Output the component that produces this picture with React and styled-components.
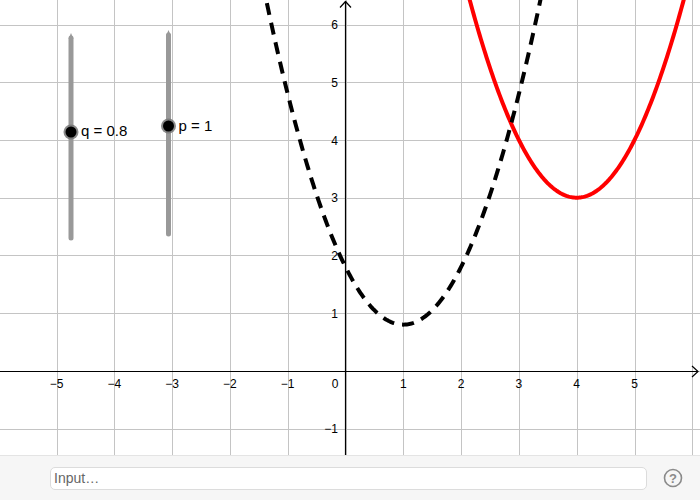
import React from 'react';
import styled, { createGlobalStyle } from 'styled-components';

const GlobalStyle = createGlobalStyle`
  html, body {
    margin: 0;
    padding: 0;
    background: #ffffff;
    font-family: "Liberation Sans", Arial, sans-serif;
  }
`;

const AppWrapper = styled.div`
  width: 700px;
  height: 500px;
  display: flex;
  flex-direction: column;
  overflow: hidden;
`;

const GraphicsView = styled.div`
  height: 455px;
  background-color: #ffffff;
  flex-shrink: 0;
`;

const Canvas = styled.svg`
  display: block;
  font-family: "Liberation Sans", Arial, sans-serif;
`;

const InputBar = styled.div`
  flex: 1;
  display: flex;
  align-items: center;
  gap: 16px;
  padding: 0 17px 0 50px;
  background-color: #f6f6f6;
  border-top: 1px solid #e4e4e4;
`;

const InputField = styled.input`
  flex: 1;
  height: 23px;
  box-sizing: border-box;
  border: 1px solid #dcdcdc;
  border-radius: 5px;
  background-color: #ffffff;
  padding: 0 3px;
  font-family: "Liberation Sans", Arial, sans-serif;
  font-size: 14px;
  color: #333;
  outline: none;

  &::placeholder {
    color: #666;
  }
`;

const HelpButton = styled.button`
  width: 20px;
  height: 20px;
  padding: 0;
  border: none;
  background: none;
  cursor: pointer;
  display: flex;
  align-items: center;
  justify-content: center;
`;

// graph coordinates
const OX = 345.5;
const OY = 370.8;
const UX = 57.8;
const UY = 57.7;
const W = 700;
const H = 455;

const px = (x) => OX + x * UX;
const py = (y) => OY - y * UY;
const crisp = (v) => Math.round(v) + 0.5;

const curvePath = (f, from, to) => {
  const pts = [];
  for (let x = from; x <= to + 1e-9; x += 0.02) {
    pts.push(`${px(x).toFixed(2)},${py(f(x)).toFixed(2)}`);
  }
  return 'M' + pts.join(' L');
};

const minus = (n) => (n < 0 ? `\u2212${-n}` : `${n}`);

const Slider = ({ x, top, bottom, value, label, labelY }) => (
  <g>
    <line x1={x} y1={top + 5} x2={x} y2={bottom} stroke="#999" strokeWidth="5" strokeLinecap="round" />
    <polygon points={`${x - 2.5},${top + 6} ${x},${top} ${x + 2.5},${top + 6}`} fill="#999" />
    <circle cx={x} cy={value} r="7.5" fill="#777" opacity="0.85" />
    <circle cx={x} cy={value} r="5.5" fill="#000" />
    <text x={x + 10} y={labelY} fontSize="15" fill="#000">{label}</text>
  </g>
);

const Graph = () => {
  const xs = [];
  for (let k = -5; k <= 6; k++) xs.push(k);
  const ys = [];
  for (let k = -1; k <= 6; k++) ys.push(k);

  return (
    <Canvas width={W} height={H} viewBox={`0 0 ${W} ${H}`}>
      {xs.map((k) => (
        <line key={`gx${k}`} x1={crisp(px(k))} y1="0" x2={crisp(px(k))} y2={H} stroke="#c4c4c4" strokeWidth="1" />
      ))}
      {ys.map((k) => (
        <line key={`gy${k}`} x1="0" y1={crisp(py(k))} x2={W} y2={crisp(py(k))} stroke="#c4c4c4" strokeWidth="1" />
      ))}

      {/* axes */}
      <line x1="0" y1={crisp(OY)} x2="698" y2={crisp(OY)} stroke="#000" strokeWidth="1.2" />
      <polyline points={`692,${crisp(OY) - 5.5} 698,${crisp(OY)} 692,${crisp(OY) + 5.5}`} fill="none" stroke="#000" strokeWidth="1.2" />
      <line x1={crisp(OX) - 1} y1={H} x2={crisp(OX) - 1} y2="1.5" stroke="#000" strokeWidth="1.2" />
      <polyline points={`${crisp(OX) - 6.5},7.5 ${crisp(OX) - 1},1.5 ${crisp(OX) + 4.5},7.5`} fill="none" stroke="#000" strokeWidth="1.2" />

      {/* axis labels */}
      <g fontSize="12" fill="#000">
        {xs.filter((k) => k !== 0 && k !== 6).map((k) => (
          <text key={`lx${k}`} x={px(k)} y="387.5" textAnchor="middle">{minus(k)}</text>
        ))}
        <text x="335" y="387.5" textAnchor="middle">0</text>
        {ys.filter((k) => k !== 0).map((k) => (
          <text key={`ly${k}`} x="338" y={py(k) + 4.5} textAnchor="end">{minus(k)}</text>
        ))}
      </g>

      {/* functions */}
      <path d={curvePath((x) => (x - 4) * (x - 4) + 3, 2, 6.2)} fill="none" stroke="#ff0000" strokeWidth="4" />
      <path d={curvePath((x) => (x - 1) * (x - 1) + 0.8, -1.5, 3.6)} fill="none" stroke="#000" strokeWidth="4" strokeDasharray="12 8" />

      {/* sliders */}
      <Slider x={71} top={33} bottom={238} value={132} label="q = 0.8" labelY={136} />
      <Slider x={168.5} top={30} bottom={234} value={126} label="p = 1" labelY={130.5} />
    </Canvas>
  );
};

const HelpIcon = () => (
  <svg width="20" height="20" viewBox="0 0 20 20">
    <circle cx="10" cy="10" r="8.5" fill="none" stroke="#8a8a8a" strokeWidth="1.6" />
    <text x="10" y="14.5" textAnchor="middle" fontSize="13" fontWeight="bold" fill="#8a8a8a" fontFamily="Liberation Sans, Arial, sans-serif">?</text>
  </svg>
);

const App = () => {
  return (
    <AppWrapper>
      <GlobalStyle />
      <GraphicsView>
        <Graph />
      </GraphicsView>
      <InputBar>
        <InputField placeholder="Input…" />
        <HelpButton aria-label="Help">
          <HelpIcon />
        </HelpButton>
      </InputBar>
    </AppWrapper>
  );
};

export default App;
